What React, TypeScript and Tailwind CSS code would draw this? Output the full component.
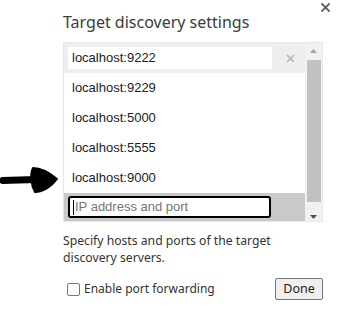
import React from 'react';

const hosts = ['localhost:9229', 'localhost:5000', 'localhost:5555', 'localhost:9000'];

const App = () => {
  return (
    <div className="relative w-[339px] h-[310px] bg-white overflow-hidden">
      {/* close button */}
      <svg className="absolute left-[321px] top-[3px]" width="9" height="9" viewBox="0 0 9 9">
        <path d="M1 1L8 8M8 1L1 8" stroke="#5f5f5f" strokeWidth="1.8" strokeLinecap="square" />
      </svg>

      {/* arrow pointing at the last entry */}
      <svg className="absolute left-0 top-[165px]" width="60" height="30" viewBox="0 0 60 30">
        <path d="M3 15.5L36 14.5" stroke="#000" strokeWidth="7" strokeLinecap="round" />
        <path d="M33 3C41 3 51 9 57 14C52 21 43 27 35 27C31 20 30 9 33 3Z" fill="#000" stroke="#000" strokeWidth="2" strokeLinejoin="round" />
      </svg>

      <div className="pl-[63px] pt-[9px] pr-[16px]">
        <h1 className="text-[16px] leading-[26px] text-[#3c3c3c] font-['Noto_Sans',sans-serif]">
          Target discovery settings
        </h1>

        <div className="mt-[7px] flex w-[260px] h-[180px] border border-[#e8e8e8] font-['Liberation_Sans',Arial,sans-serif] text-[13px] text-[#222]">
          <div className="flex-1 flex flex-col">
            <div className="h-[30px] flex items-center bg-[#eeeeee] pl-[4px]">
              <div className="w-[204px] h-[22px] bg-white flex items-center pl-[4px]">localhost:9222</div>
              <svg className="ml-[14px]" width="9" height="9" viewBox="0 0 9 9">
                <path d="M1 1L8 8M8 1L1 8" stroke="#b3b3b3" strokeWidth="1.6" />
              </svg>
            </div>
            {hosts.map((h) => (
              <div key={h} className="h-[30px] flex items-center pl-[8px]">
                {h}
              </div>
            ))}
            <div className="flex-1 bg-[#c9c9c9] flex items-center pl-[4px]">
              <div className="relative w-[203px] h-[22px] bg-white border-2 border-black rounded-[3px] flex items-center pl-[3px] text-[#767676]">
                <span className="w-px h-[15px] bg-black mr-[1px]" />
                IP address and port
              </div>
            </div>
          </div>
          <div className="w-[17px] bg-[#f1f1f1] flex flex-col items-center">
            <svg className="mt-[6px]" width="7" height="4" viewBox="0 0 7 4">
              <path d="M0 4L3.5 0L7 4Z" fill="#a3a3a3" />
            </svg>
            <div className="mt-[7px] w-[14px] h-[142px] bg-[#c1c1c1]" />
            <svg className="mt-[13px]" width="7" height="4" viewBox="0 0 7 4">
              <path d="M0 0L3.5 4L7 0Z" fill="#505050" />
            </svg>
          </div>
        </div>

        <p className="mt-[10px] text-[12.2px] leading-[17px] text-[#333] font-['Noto_Sans',sans-serif] w-[230px]">
          Specify hosts and ports of the target discovery servers.
        </p>

        <div className="mt-[12px] flex items-center justify-between w-[260px]">
          <label className="flex items-center pl-[4px] text-[12px] text-[#333] font-['Noto_Sans',sans-serif]">
            <span className="w-[13px] h-[13px] border border-[#767676] rounded-[2px] bg-white mr-[4px]" />
            Enable port forwarding
          </label>
          <button className="w-[48px] h-[22px] bg-[#efefef] border border-[#767676] rounded-[2px] text-[12.5px] text-[#222] font-['Noto_Sans',sans-serif] leading-none">
            Done
          </button>
        </div>
      </div>
    </div>
  );
};

export default App;
